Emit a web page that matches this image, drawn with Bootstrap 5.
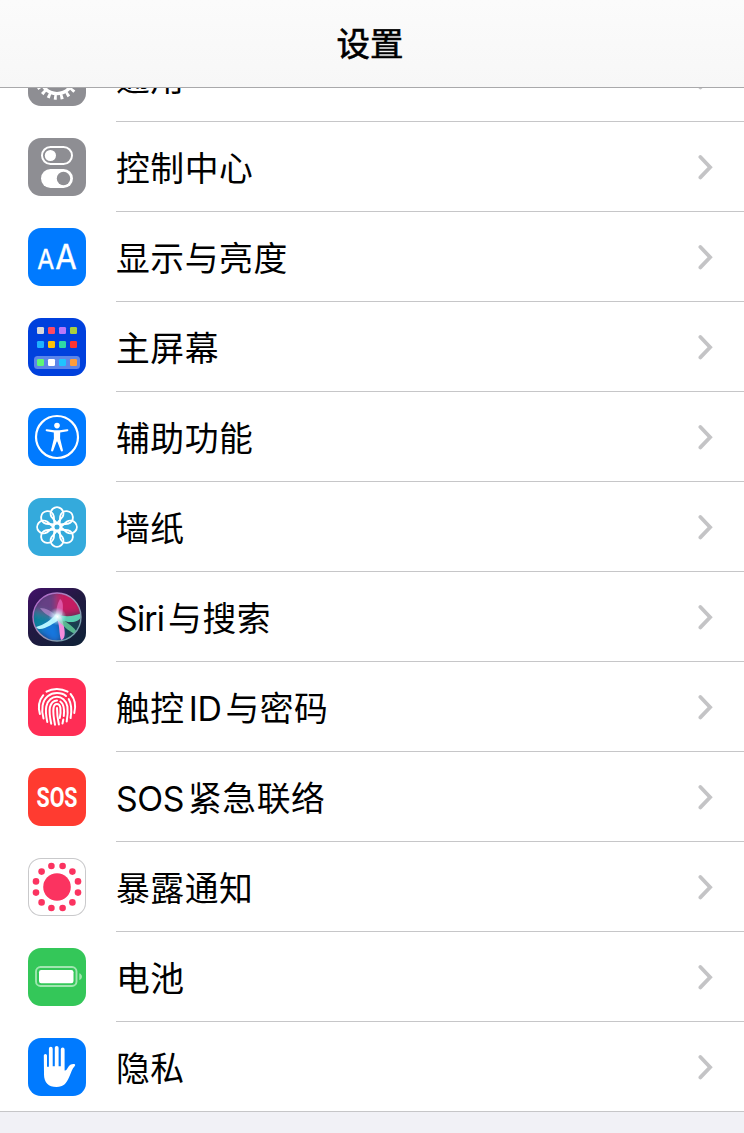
<!DOCTYPE html>
<html lang="zh-CN">
<head>
  <meta charset="UTF-8">
  <title>设置</title>
  <meta name="viewport" content="width=device-width, initial-scale=1.0">
  <link href="https://cdn.jsdelivr.net/npm/bootstrap@5.3.0/dist/css/bootstrap.min.css" rel="stylesheet">
  <style>
    body {
      background: #f1f1f6;
      color: #000;
      font-family: Inter, "Noto Sans CJK SC", sans-serif;
      overflow: hidden;
    }
    .top-bar {
      height: 88px;
      padding-right: 4px;
      background: linear-gradient(#fbfbfb, #f7f7f7);
      border-bottom: 1px solid #a9a9ab;
    }
    .top-bar h1 {
      font-size: 33.5px;
      line-height: 48px;
      -webkit-text-stroke: .6px #000;
    }
    .settings { padding-top: 32px; }
    .entry { height: 90px; padding-left: 28px; }
    .entry-line {
      margin-left: 30px;
      padding-right: 31.5px;
      border-bottom: 1px solid #c6c6c8;
    }
    .entry-name {
      font-size: 33.8px;
      letter-spacing: .55px;
      line-height: 50px;
      padding-top: 4px;
    }
    .latin { letter-spacing: -.8px; }
    .latin-caps { letter-spacing: -.4px; }
    .tile {
      width: 58px;
      height: 58px;
      margin-top: 16px;
      border-radius: 13px;
      overflow: hidden;
    }
    .tile svg { display: block; }
    .gray { background: #8e8e93; }
    .blue { background: #007aff; }
    .navy { background: #0040dd; }
    .sky { background: #34aadc; }
    .pink { background: #ff2d55; }
    .red { background: #ff3b30; }
    .green { background: #34c759; }
    .outlined { background: #fff; box-shadow: inset 0 0 0 1px #c9c9cb; }
    .entry-last { border-bottom: 1px solid #c6c6c8; }
    .entry-last .entry-line { border-bottom: 0; }
  </style>
</head>
<body>
  <header class="top-bar fixed-top d-flex align-items-center justify-content-center">
    <h1 class="m-0 fw-normal">设置</h1>
  </header>

  <svg width="0" height="0" class="position-absolute">
    <defs>
      <symbol id="chevron" viewBox="0 0 16 26">
        <path d="M3.4 3 13.1 13.2 3.4 23.4" fill="none" stroke="#c4c4c6" stroke-width="3.8" stroke-linecap="round" stroke-linejoin="miter"/>
      </symbol>
      <path id="petal" d="M29 25.4 23.6 19A6.4 6.4 0 1 1 34.4 19Z"/>
    </defs>
  </svg>

  <main class="settings">
    <div class="bg-white">
      <div class="entry d-flex">
        <div class="tile gray flex-shrink-0">
          <svg width="58" height="58" viewBox="0 0 58 58" fill="none" stroke="#fff">
            <circle cx="29" cy="29" r="16.6" stroke-width="3.4"/>
            <circle cx="29" cy="29" r="20.2" stroke-width="5" stroke-dasharray="2.8 3.55"/>
          </svg>
        </div>
        <div class="entry-line flex-grow-1 d-flex align-items-center justify-content-between">
          <span class="entry-name">通用</span>
          <svg width="16" height="26"><use href="#chevron"/></svg>
        </div>
      </div>

      <div class="entry d-flex">
        <div class="tile gray flex-shrink-0">
          <svg width="58" height="58" viewBox="0 0 58 58">
            <rect x="14" y="9" width="30" height="17" rx="8.5" fill="none" stroke="#fff" stroke-width="2"/>
            <circle cx="22.4" cy="17.5" r="5.6" fill="#fff"/>
            <rect x="13" y="31" width="32" height="19" rx="9.5" fill="#fff"/>
            <circle cx="35.5" cy="40.5" r="6.7" fill="#8e8e93"/>
          </svg>
        </div>
        <div class="entry-line flex-grow-1 d-flex align-items-center justify-content-between">
          <span class="entry-name">控制中心</span>
          <svg width="16" height="26"><use href="#chevron"/></svg>
        </div>
      </div>

      <div class="entry d-flex">
        <div class="tile blue flex-shrink-0">
          <svg width="58" height="58" viewBox="0 0 58 58" fill="#fff" stroke="#fff" stroke-width=".4" font-family="Inter">
            <text x="9.3" y="41" font-size="27" textLength="17" lengthAdjust="spacingAndGlyphs">A</text>
            <text x="27.3" y="41" font-size="33.5" textLength="21.5" lengthAdjust="spacingAndGlyphs">A</text>
          </svg>
        </div>
        <div class="entry-line flex-grow-1 d-flex align-items-center justify-content-between">
          <span class="entry-name">显示与亮度</span>
          <svg width="16" height="26"><use href="#chevron"/></svg>
        </div>
      </div>

      <div class="entry d-flex">
        <div class="tile navy flex-shrink-0">
          <svg width="58" height="58" viewBox="0 0 58 58">
            <rect x="6" y="38" width="46" height="13" rx="3.5" fill="#fff" fill-opacity=".36"/>
            <rect x="9" y="9" width="7" height="7" rx="1.3" fill="#d8d8dc"/>
            <rect x="20" y="9" width="7" height="7" rx="1.3" fill="#ff4a63"/>
            <rect x="31" y="9" width="7" height="7" rx="1.3" fill="#b877fa"/>
            <rect x="42" y="9" width="7" height="7" rx="1.3" fill="#a9cf3f"/>
            <rect x="9" y="23" width="7" height="7" rx="1.3" fill="#1fb2ff"/>
            <rect x="20" y="23" width="7" height="7" rx="1.3" fill="#ffc107"/>
            <rect x="31" y="23" width="7" height="7" rx="1.3" fill="#2fd7a5"/>
            <rect x="42" y="23" width="7" height="7" rx="1.3" fill="#ff3432"/>
            <rect x="9" y="41" width="7" height="7" rx="1.3" fill="#5df777"/>
            <rect x="20" y="41" width="7" height="7" rx="1.3" fill="#fff"/>
            <rect x="31" y="41" width="7" height="7" rx="1.3" fill="#1fc4ff"/>
            <rect x="42" y="41" width="7" height="7" rx="1.3" fill="#ff9d3a"/>
          </svg>
        </div>
        <div class="entry-line flex-grow-1 d-flex align-items-center justify-content-between">
          <span class="entry-name">主屏幕</span>
          <svg width="16" height="26"><use href="#chevron"/></svg>
        </div>
      </div>

      <div class="entry d-flex">
        <div class="tile blue flex-shrink-0">
          <svg width="58" height="58" viewBox="0 0 58 58" fill="#fff">
            <circle cx="29" cy="29" r="21" fill="none" stroke="#fff" stroke-width="2.2"/>
            <circle cx="29" cy="17.6" r="2.8"/>
            <path d="M18.8 21.2 26.5 22.2H31.5L39.2 21.2A1 1 0 0 1 39.5 23.2L32.2 24.4 32.1 30.5 34.9 42A1.1 1.1 0 0 1 32.8 42.7L29.3 33.5H28.7L25.2 42.7A1.1 1.1 0 0 1 23.1 42L25.9 30.5 25.8 24.4 18.5 23.2A1 1 0 0 1 18.8 21.2Z"/>
          </svg>
        </div>
        <div class="entry-line flex-grow-1 d-flex align-items-center justify-content-between">
          <span class="entry-name">辅助功能</span>
          <svg width="16" height="26"><use href="#chevron"/></svg>
        </div>
      </div>

      <div class="entry d-flex">
        <div class="tile sky flex-shrink-0">
          <svg width="58" height="58" viewBox="0 0 58 58" fill="none" stroke="#fff" stroke-width="1.9" stroke-linejoin="round">
            <use href="#petal"/>
            <use href="#petal" transform="rotate(45 29 29)"/>
            <use href="#petal" transform="rotate(90 29 29)"/>
            <use href="#petal" transform="rotate(135 29 29)"/>
            <use href="#petal" transform="rotate(180 29 29)"/>
            <use href="#petal" transform="rotate(225 29 29)"/>
            <use href="#petal" transform="rotate(270 29 29)"/>
            <use href="#petal" transform="rotate(315 29 29)"/>
            <circle cx="29" cy="29" r="3.5"/>
          </svg>
        </div>
        <div class="entry-line flex-grow-1 d-flex align-items-center justify-content-between">
          <span class="entry-name">墙纸</span>
          <svg width="16" height="26"><use href="#chevron"/></svg>
        </div>
      </div>

      <div class="entry d-flex">
        <div class="tile flex-shrink-0">
          <svg width="58" height="58" viewBox="0 0 58 58">
            <defs>
              <linearGradient id="siriBg" x1="0" y1="0" x2=".75" y2="1">
                <stop offset="0" stop-color="#43106a"/>
                <stop offset=".5" stop-color="#221942"/>
                <stop offset="1" stop-color="#112139"/>
              </linearGradient>
              <linearGradient id="siriRing" x1="0" y1="0" x2="1" y2="1">
                <stop offset="0" stop-color="#b45fd0"/>
                <stop offset=".5" stop-color="#a58fb5"/>
                <stop offset="1" stop-color="#5aa8a5"/>
              </linearGradient>
              <radialGradient id="siriGlow">
                <stop offset="0" stop-color="#fff"/>
                <stop offset=".3" stop-color="#dffaff" stop-opacity=".8"/>
                <stop offset="1" stop-color="#8fe8ff" stop-opacity="0"/>
              </radialGradient>
              <filter id="soft" x="-30%" y="-30%" width="160%" height="160%"><feGaussianBlur stdDeviation="3.8"/></filter>
              <filter id="haze"><feGaussianBlur stdDeviation=".5"/></filter>
              <clipPath id="orb"><circle cx="29" cy="29" r="24"/></clipPath>
            </defs>
            <rect width="58" height="58" fill="url(#siriBg)"/>
            <g clip-path="url(#orb)">
              <rect width="58" height="58" fill="#2c2853"/>
              <g filter="url(#soft)">
                <path d="M29 29 24 2H48L58 25Z" fill="#c61f62"/>
                <path d="M29 29 3 22 13 5 29 4Z" fill="#664085"/>
                <path d="M29 29 2 21V43L14 48Z" fill="#0d819c"/>
                <path d="M29 29 10 43 26 57 36 50Z" fill="#1377df"/>
                <path d="M29 29 35 54 55 48V31Z" fill="#123f50"/>
              </g>
              <g filter="url(#haze)">
                <path d="M28 29C28 22 29 16 32 11 36 13 35 22 34 27Z" fill="#e96bc0" opacity=".7"/>
                <path d="M29 29C24 23 18 20 12 20 16 26 23 29 29 32Z" fill="#b88ad0" opacity=".7"/>
                <path d="M28 26C23 32 16 37 8 39 12 45 25 36 32 31Z" fill="#b6f4ff"/>
                <path d="M29 26C38 30 46 28 54 25 54 34 43 37 31 31Z" fill="#5ce8c0" opacity=".85"/>
                <path d="M29 30C32 39 31 46 33 52 39 51 37 39 33 29Z" fill="#f58bdc"/>
                <path d="M31 29C39 35 46 38 50 46 43 46 35 38 29 31Z" fill="#72e8a8" opacity=".7"/>
              </g>
              <circle cx="29.5" cy="28.5" r="9" fill="url(#siriGlow)"/>
            </g>
            <circle cx="29" cy="29" r="24" fill="none" stroke="url(#siriRing)" stroke-width="1.4"/>
          </svg>
        </div>
        <div class="entry-line flex-grow-1 d-flex align-items-center justify-content-between">
          <span class="entry-name"><span class="latin me-1">Siri</span>与搜索</span>
          <svg width="16" height="26"><use href="#chevron"/></svg>
        </div>
      </div>

      <div class="entry d-flex">
        <div class="tile pink flex-shrink-0">
          <svg width="58" height="58" viewBox="0 0 58 58" fill="none" stroke="#fff" stroke-width="2" stroke-linecap="round">
            <path d="M18.5 13.6C24.5 10 33 10 39.6 13.6"/>
            <path d="M11.9 36C9.8 28.5 11.3 22 15.3 17.2"/>
            <path d="M42.6 16C47 21 48 28 46.3 35"/>
            <path d="M15.5 40.5C13.8 35 14 31 14.6 27.5 16 19.5 22 15 29 15 32.5 15 35.8 16 38 18"/>
            <path d="M40.7 21C43.6 26 43.8 33 42.6 40"/>
            <path d="M19.3 44C17.6 36 17.6 32 18.3 28.5 20.8 15.5 37 15.5 39.4 28.5 40 33 39.7 38 38.7 43.5"/>
            <path d="M23.2 45.8C21.4 37 21.2 33 21.9 29.3 23 25 25.5 22.5 29 22.5"/>
            <path d="M32.3 23.5C36.6 26.3 36.4 33 35.8 38M35.3 41.5 34.5 45.5"/>
            <path d="M27 46.8C25.5 39 24.9 34 25.5 30 26.3 24.8 31.6 24.8 32.4 30 32.8 34 32.4 37.5 31.8 40"/>
            <path d="M30.9 46.5C29.6 41 29 35 29 30"/>
          </svg>
        </div>
        <div class="entry-line flex-grow-1 d-flex align-items-center justify-content-between">
          <span class="entry-name">触控<span class="latin-caps ms-1 me-1 ps-1px">ID</span>与密码</span>
          <svg width="16" height="26"><use href="#chevron"/></svg>
        </div>
      </div>

      <div class="entry d-flex">
        <div class="tile red flex-shrink-0">
          <svg width="58" height="58" viewBox="0 0 58 58" fill="#fff">
            <text x="8.5" y="38.5" font-family="Roboto" font-weight="700" font-size="27.5" textLength="41" lengthAdjust="spacingAndGlyphs">SOS</text>
          </svg>
        </div>
        <div class="entry-line flex-grow-1 d-flex align-items-center justify-content-between">
          <span class="entry-name"><span class="latin-caps me-1">SOS</span>紧急联络</span>
          <svg width="16" height="26"><use href="#chevron"/></svg>
        </div>
      </div>

      <div class="entry d-flex">
        <div class="tile outlined flex-shrink-0">
          <svg width="58" height="58" viewBox="0 0 58 58" fill="#fb3360">
            <circle cx="29" cy="29" r="13.8"/>
            <circle cx="34.6" cy="8" r="3.3"/>
            <circle cx="44.4" cy="13.6" r="3.3"/>
            <circle cx="50" cy="23.4" r="3.3"/>
            <circle cx="50" cy="34.6" r="3.3"/>
            <circle cx="44.4" cy="44.4" r="3.3"/>
            <circle cx="34.6" cy="50" r="3.3"/>
            <circle cx="23.4" cy="50" r="3.3"/>
            <circle cx="13.6" cy="44.4" r="3.3"/>
            <circle cx="8" cy="34.6" r="3.3"/>
            <circle cx="8" cy="23.4" r="3.3"/>
            <circle cx="13.6" cy="13.6" r="3.3"/>
            <circle cx="23.4" cy="8" r="3.3"/>
          </svg>
        </div>
        <div class="entry-line flex-grow-1 d-flex align-items-center justify-content-between">
          <span class="entry-name">暴露通知</span>
          <svg width="16" height="26"><use href="#chevron"/></svg>
        </div>
      </div>

      <div class="entry d-flex">
        <div class="tile green flex-shrink-0">
          <svg width="58" height="58" viewBox="0 0 58 58">
            <rect x="8" y="19" width="40.5" height="19" rx="4.5" fill="none" stroke="#a0e6b0" stroke-width="1.9"/>
            <rect x="11" y="22" width="34.5" height="13.3" rx="2.2" fill="#fff"/>
            <path d="M51.3 25.2C54.8 26.3 54.8 31 51.3 32Z" fill="#a0e6b0"/>
          </svg>
        </div>
        <div class="entry-line flex-grow-1 d-flex align-items-center justify-content-between">
          <span class="entry-name">电池</span>
          <svg width="16" height="26"><use href="#chevron"/></svg>
        </div>
      </div>

      <div class="entry entry-last d-flex">
        <div class="tile blue flex-shrink-0">
          <svg width="58" height="58" viewBox="0 0 58 58" fill="#fff">
            <path d="M15.8 17.5A1.6 1.6 0 0 1 19 17.5V28.8H20.9V10.7A1.9 1.9 0 0 1 24.7 10.7V28.2H26.8V9.8A1.9 1.9 0 0 1 30.6 9.8V28.2H32.8V11.4A1.9 1.9 0 0 1 36.6 11.4V32.5C38 33 38.8 31.5 39.8 29.8 41.4 27 43.2 26 46 26.1 47.4 26.2 47.5 27.3 46.6 28.2 44.2 30.5 43.2 34.5 41.2 39 38.4 45.5 35.5 49 28.5 49 20.5 49 16 44.5 16 36.5Z"/>
          </svg>
        </div>
        <div class="entry-line flex-grow-1 d-flex align-items-center justify-content-between">
          <span class="entry-name">隐私</span>
          <svg width="16" height="26"><use href="#chevron"/></svg>
        </div>
      </div>
    </div>
  </main>

  <script src="https://cdn.jsdelivr.net/npm/bootstrap@5.3.0/dist/js/bootstrap.bundle.min.js"></script>
</body>
</html>
